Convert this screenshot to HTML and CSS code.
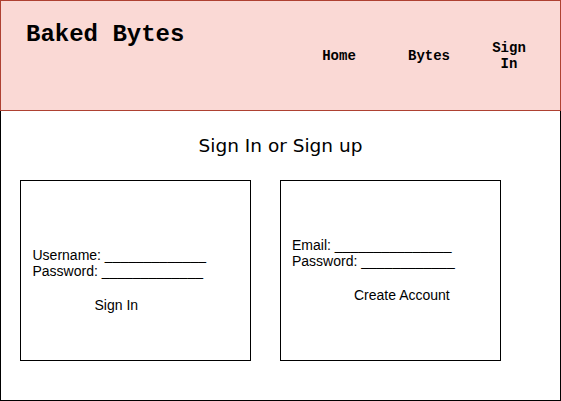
FILE: index.html
```html
<!DOCTYPE html>
<html>
<head>
<meta charset="utf-8">
<title>Baked Bytes</title>
<link rel="stylesheet" href="styles.css">
</head>
<body>
<div class="page">
  <header class="header">
    <div class="brand">Baked Bytes</div>
    <nav class="nav">
      <a class="nav-item" href="#">Home</a>
      <a class="nav-item" href="#">Bytes</a>
      <a class="nav-item nav-narrow" href="#">Sign In</a>
    </nav>
  </header>
  <main class="main">
    <h1 class="title">Sign In or Sign up</h1>
    <div class="boxes">
      <section class="box box-signin">
        <div class="line">Username: _____________</div>
        <div class="line">Password: _____________</div>
        <div class="line action action-signin">Sign In</div>
      </section>
      <section class="box box-signup">
        <div class="line">Email: _______________</div>
        <div class="line">Password: ____________</div>
        <div class="line action action-create">Create Account</div>
      </section>
    </div>
  </main>
</div>
</body>
</html>
```

FILE: styles.css
```css
* { box-sizing: border-box; }
html, body { margin: 0; padding: 0; background: #fff; }
body { width: 561px; height: 401px; overflow: hidden; color: #000; }

.page { width: 561px; height: 401px; display: flex; flex-direction: column; }

.header {
  height: 111px;
  background: #fad9d5;
  border: 1px solid #ae4132;
  display: flex;
  align-items: flex-start;
  padding: 22px 31px 0 25px;
}
.brand {
  font-family: "Liberation Mono", "Courier New", monospace;
  font-weight: bold;
  font-size: 24px;
  line-height: 24px;
}
.nav {
  margin-left: auto;
  align-self: center;
  margin-top: -22px;
  display: flex;
  align-items: center;
  gap: 30px;
}
.nav-item {
  width: 60px;
  text-align: center;
  font-family: "Liberation Mono", "Courier New", monospace;
  font-weight: bold;
  font-size: 14px;
  line-height: 16px;
  color: #000;
  text-decoration: none;
}
.nav-narrow { width: 40px; }

.main {
  height: 290px;
  border: 1px solid #000;
  border-top: none;
  padding-top: 24px;
}
.title {
  margin: 0;
  text-align: center;
  font-family: "DejaVu Sans", Verdana, sans-serif;
  font-weight: normal;
  font-size: 18.5px;
  line-height: 22px;
}
.boxes {
  display: flex;
  gap: 29px;
  padding-left: 19px;
  margin-top: 23px;
}
.box {
  height: 181px;
  border: 1px solid #000;
  font-family: "Liberation Sans", Arial, sans-serif;
  font-size: 14px;
  line-height: 16.8px;
}
.box-signin { width: 231px; padding: 65.6px 0 0 11.5px; }
.box-signup { width: 221px; padding: 55.6px 0 0 11px; }
.line { white-space: pre; }
.action { margin-top: 16.8px; }
.action-signin { padding-left: 62px; }
.action-create { padding-left: 62px; }
```
